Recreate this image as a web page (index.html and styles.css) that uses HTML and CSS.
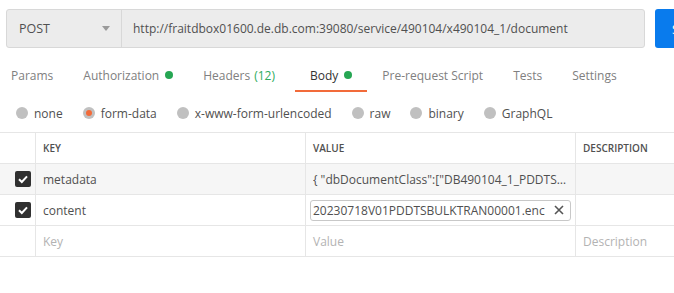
FILE: index.html
```html
<!DOCTYPE html>
<html>
<head>
<meta charset="utf-8">
<link rel="stylesheet" href="styles.css">
</head>
<body>
<div class="topbar">
  <div class="request">
    <div class="method"><span>POST</span><span class="caret"></span></div>
    <div class="url">http://fraitdbox01600.de.db.com:39080/service/490104/x490104_1/document</div>
  </div>
  <div class="send">Send</div>
</div>
<div class="tabs">
  <div class="tab">Params</div>
  <div class="tab">Authorization<span class="dot"></span></div>
  <div class="tab wide">Headers <span class="count">(12)</span></div>
  <div class="tab active">Body<span class="dot"></span></div>
  <div class="tab">Pre-request Script</div>
  <div class="tab">Tests</div>
  <div class="tab">Settings</div>
</div>
<div class="radios">
  <div class="radio"><span class="circle"></span>none</div>
  <div class="radio"><span class="circle on"></span>form-data</div>
  <div class="radio"><span class="circle"></span>x-www-form-urlencoded</div>
  <div class="radio"><span class="circle"></span>raw</div>
  <div class="radio"><span class="circle"></span>binary</div>
  <div class="radio"><span class="circle"></span>GraphQL</div>
</div>
<div class="table">
  <div class="row head">
    <div class="cell chk"></div>
    <div class="cell key">KEY</div>
    <div class="cell val">VALUE</div>
    <div class="cell desc">DESCRIPTION</div>
  </div>
  <div class="row hover">
    <div class="cell chk"><span class="box"><svg width="12" height="12" viewBox="0 0 12 12"><path d="M2 6.3 L4.8 9 L10 3.3" fill="none" stroke="#fff" stroke-width="2"/></svg></span></div>
    <div class="cell key">metadata</div>
    <div class="cell val"><span class="trunc">{ "dbDocumentClass":["DB490104_1_PDDTSBULKTRAN"] }</span></div>
    <div class="cell desc"></div>
  </div>
  <div class="row">
    <div class="cell chk"><span class="box"><svg width="12" height="12" viewBox="0 0 12 12"><path d="M2 6.3 L4.8 9 L10 3.3" fill="none" stroke="#fff" stroke-width="2"/></svg></span></div>
    <div class="cell key">content</div>
    <div class="cell val file"><span class="filebox"><span class="fname">20230718V01PDDTSBULKTRAN00001.enc</span><svg width="10" height="10" viewBox="0 0 10 10"><path d="M1 1 L9 9 M9 1 L1 9" stroke="#555" stroke-width="1.6"/></svg></span></div>
    <div class="cell desc"></div>
  </div>
  <div class="row">
    <div class="cell chk"></div>
    <div class="cell key ph">Key</div>
    <div class="cell val ph">Value</div>
    <div class="cell desc ph">Description</div>
  </div>
</div>
</body>
</html>
```
FILE: styles.css
```css
* { box-sizing: border-box; }
body {
  margin: 0;
  font-family: "Open Sans", "Noto Sans", sans-serif;
  font-size: 12px;
  color: #333;
  background: #fff;
  width: 674px;
  overflow: hidden;
}
.topbar {
  display: flex;
  padding: 9px 0 0 6px;
  height: 48px;
}
.request {
  display: flex;
  flex: none;
  width: 639px;
  height: 39px;
  background: #ececec;
  border: 1px solid #d8d8d8;
  border-radius: 3px;
}
.method {
  width: 115px;
  border-right: 1px solid #d8d8d8;
  display: flex;
  align-items: center;
  justify-content: space-between;
  padding: 0 11px 0 12px;
  color: #505050;
  font-size: 12.5px;
}
.caret {
  width: 0; height: 0;
  border-left: 4px solid transparent;
  border-right: 4px solid transparent;
  border-top: 5px solid #9a9a9a;
}
.url {
  display: flex;
  align-items: center;
  padding-left: 11px;
  color: #505050;
  white-space: nowrap;
}
.send {
  flex: none;
  margin-left: 10px;
  width: 70px;
  height: 39px;
  background: #097bed;
  border-radius: 3px;
  color: #fff;
  display: flex;
  align-items: center;
  padding-left: 17px;
  font-size: 13px;
}
.tabs {
  display: flex;
  padding-left: 11px;
  height: 44px;
  align-items: stretch;
}
.tab {
  display: flex;
  align-items: center;
  color: #808080;
  margin-right: 30px;
  padding-top: 12px;
  white-space: nowrap;
  border-bottom: 2px solid transparent;
  height: 44px;
}
.tab.wide { margin-right: 35px; }
.tab.active {
  color: #333;
  border-bottom-color: #f26b3a;
  padding: 12px 15px 0 15px;
  margin-left: -15px;
  margin-right: 15px;
}
.count { color: #2eab5c; margin-left: 4px; }
.dot {
  width: 8px; height: 8px;
  border-radius: 50%;
  background: #26a653;
  margin-left: 6px;
}
.radios {
  display: flex;
  align-items: center;
  padding: 2px 0 0 16px;
  height: 40px;
}
.radio {
  display: flex;
  align-items: center;
  color: #505050;
  margin-right: 20px;
}
.circle {
  width: 12px; height: 12px;
  border-radius: 50%;
  background: #c0c0c0;
  margin-right: 6px;
  display: flex;
  align-items: center;
  justify-content: center;
}
.circle.on::after {
  content: "";
  width: 6px; height: 6px;
  border-radius: 50%;
  background: #f26b3a;
}
.table {
  border-top: 1px solid #e6e6e6;
}
.row {
  display: grid;
  grid-template-columns: 36px 270px 270px 1fr;
  height: 31px;
  border-bottom: 1px solid #e6e6e6;
}
.row.hover { background: #f6f6f6; }
.cell {
  display: flex;
  align-items: center;
  padding-left: 7px;
  border-right: 1px solid #e6e6e6;
  color: #505050;
  white-space: nowrap;
  overflow: hidden;
  min-width: 0;
}
.cell.desc { border-right: none; }
.row.head .cell {
  font-size: 10px;
  font-weight: 600;
  color: #505050;
}
.cell.chk {
  justify-content: flex-end;
  padding: 0 4px 0 0;
}
.box {
  width: 16px; height: 16px;
  background: #303030;
  border-radius: 2px;
  display: flex;
  align-items: center;
  justify-content: center;
}
.trunc {
  overflow: hidden;
  text-overflow: ellipsis;
  white-space: nowrap;
  max-width: 256px;
  display: block;
}
.cell.file { padding-left: 4px; }
.filebox {
  display: flex;
  align-items: center;
  width: 261px;
  height: 21px;
  border: 1px solid #c8c8c8;
  border-radius: 3px;
  background: #fff;
  padding: 0 6px 0 2px;
  justify-content: space-between;
}
.fname { color: #505050; }
.ph { color: #b3b3b3; }
```
